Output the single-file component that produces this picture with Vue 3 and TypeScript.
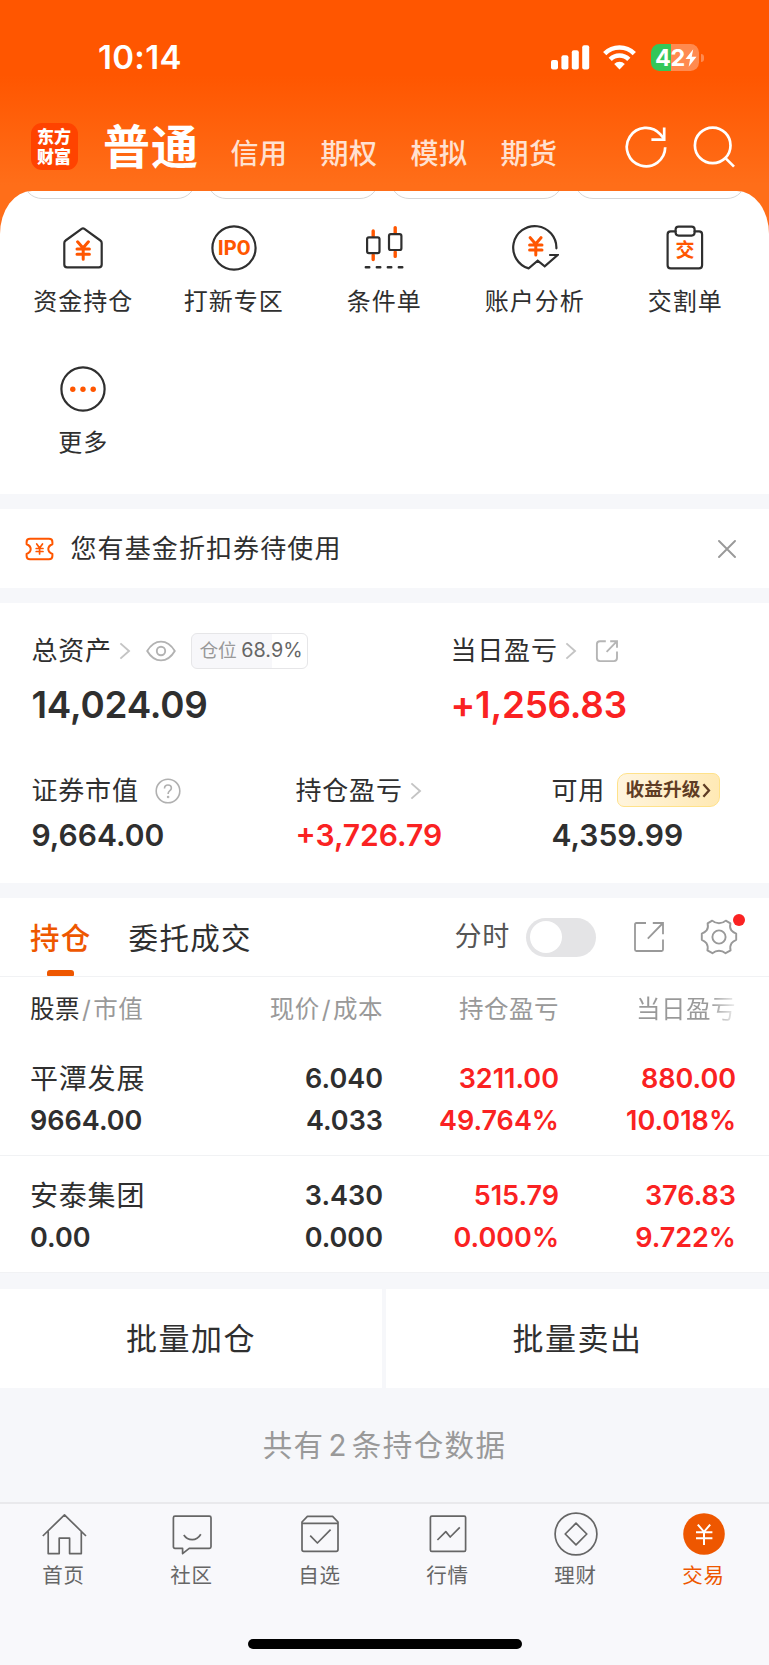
<script setup lang="ts">
interface Holding {
  name: string
  value: string
  price: string
  cost: string
  profit: string
  profitRate: string
  dayProfit: string
  dayRate: string
}

const accounts: string[] = ['信用', '期权', '模拟', '期货']

const shortcuts: { icon: string; label: string }[] = [
  { icon: 'house', label: '资金持仓' },
  { icon: 'ipo', label: '打新专区' },
  { icon: 'candles', label: '条件单' },
  { icon: 'analysis', label: '账户分析' },
  { icon: 'clipboard', label: '交割单' },
  { icon: 'more', label: '更多' },
]

const holdings: Holding[] = [
  {
    name: '平潭发展', value: '9664.00', price: '6.040', cost: '4.033',
    profit: '3211.00', profitRate: '49.764%', dayProfit: '880.00', dayRate: '10.018%',
  },
  {
    name: '安泰集团', value: '0.00', price: '3.430', cost: '0.000',
    profit: '515.79', profitRate: '0.000%', dayProfit: '376.83', dayRate: '9.722%',
  },
]

const tabs: { icon: string; label: string }[] = [
  { icon: 'home', label: '首页' },
  { icon: 'community', label: '社区' },
  { icon: 'watchlist', label: '自选' },
  { icon: 'market', label: '行情' },
  { icon: 'wealth', label: '理财' },
  { icon: 'trade', label: '交易' },
]
</script>

<template>
  <div class="screen">
    <header class="top">
      <div class="status">
        <span class="time">10:14</span>
        <div class="signals">
          <svg class="bars" width="39" height="25" viewBox="0 0 39 25" fill="#fff">
            <rect x="0" y="15" width="7" height="9.5" rx="2" />
            <rect x="10.4" y="10.3" width="7" height="14.2" rx="2" />
            <rect x="20.8" y="5.3" width="7" height="19.2" rx="2" />
            <rect x="31.2" y="0.2" width="7" height="24.3" rx="2" />
          </svg>
          <svg class="wifi" width="33" height="25" viewBox="0 0 33 25">
            <path d="M16.5 24.4 L11.2 19 A7.6 7.6 0 0 1 21.8 19 Z" fill="#fff" />
            <path d="M7.2 14.3 A13.2 13.2 0 0 1 25.8 14.3" fill="none" stroke="#fff" stroke-width="4.6" />
            <path d="M1.7 8.6 A21 21 0 0 1 31.3 8.6" fill="none" stroke="#fff" stroke-width="4.6" />
          </svg>
          <div class="battery">
            <div class="cell">
              <span class="level">42</span>
              <svg width="12" height="18" viewBox="0 0 11 17"><path d="M7.6 .3 L.3 9.5 H4.7 L3.3 16.7 L10.7 7.3 H6.2 Z" fill="#fff" /></svg>
            </div>
            <i class="nub"></i>
          </div>
        </div>
      </div>
      <nav class="accounts">
        <div class="logo"><span>东方财富</span></div>
        <span class="current">普通</span>
        <span v-for="a in accounts" :key="a" class="account">{{ a }}</span>
        <svg class="refresh" width="42" height="42" viewBox="0 0 42 42" fill="none" stroke="#fff" stroke-width="2.7">
          <path d="M40.2 21.3 A19.2 19.2 0 1 1 35.4 8.4 L39 12.6" />
          <path d="M39.2 1.5 V13.6 H26.4" />
        </svg>
        <svg class="search" width="42" height="42" viewBox="0 0 42 42" fill="none" stroke="#fff" stroke-width="2.7">
          <circle cx="19.7" cy="19.4" r="17.8" />
          <path d="M32 31.6 L41 40.6" />
        </svg>
      </nav>
    </header>

    <section class="panel">
      <div class="pills"><i v-for="n in 4" :key="n"></i></div>
      <div class="shortcuts">
        <div v-for="s in shortcuts" :key="s.label" class="shortcut">
          <svg width="48" height="48" viewBox="0 0 48 48" fill="none" stroke="#2f2f2f" stroke-width="2.2" stroke-linejoin="round" stroke-linecap="round">
            <template v-if="s.icon === 'house'">
              <path d="M5.3 19 Q5.3 17.4 6.6 16.5 L22.6 4.8 Q24 3.8 25.4 4.8 L41.4 16.5 Q42.7 17.4 42.7 19 V40.5 Q42.7 43.3 39.9 43.3 H8.1 Q5.3 43.3 5.3 40.5 Z" />
              <path d="M18.6 17.8 L24 24 L29.4 17.8 M18 25.1 H30.4 M18 30.2 H30.4 M24.2 24 V35.2" stroke="#ff5600" stroke-width="3" />
            </template>
            <template v-else-if="s.icon === 'ipo'">
              <circle cx="24" cy="24" r="21.6" />
              <text x="24.2" y="31" text-anchor="middle" class="ipo">IPO</text>
            </template>
            <template v-else-if="s.icon === 'candles'">
              <path d="M13.2 7 V12 M13.2 31 V35.6 M35.2 3.6 V9 M35.2 28 V32.4" stroke="#ff5600" stroke-width="3.4" />
              <rect x="7.1" y="13.3" width="12.4" height="15.8" rx="1.8" />
              <rect x="29" y="10.2" width="12.4" height="15.8" rx="1.8" />
              <path d="M5.8 43.3 H9.3 M16.8 43.3 H20.3 M27.8 43.3 H31.3 M38.8 43.3 H42.3" stroke-width="2.4" />
            </template>
            <template v-else-if="s.icon === 'analysis'">
              <path d="M45.4 24.3 A21.6 21.6 0 1 0 17.7 44.4 L26.7 36.7 L33.7 42.3 L46.6 31 H39" stroke-linejoin="miter" />
              <path d="M19.2 13.7 L24.6 19.9 L30 13.7 M18.6 21 H31 M18.6 26.1 H31 M24.8 20 V31" stroke="#ff5600" stroke-width="3" />
            </template>
            <template v-else-if="s.icon === 'clipboard'">
              <path d="M14.6 7.4 H9.7 Q6.6 7.4 6.6 10.5 V41.2 Q6.6 44.3 9.7 44.3 H38 Q41.1 44.3 41.1 41.2 V10.5 Q41.1 7.4 38 7.4 H33.6" />
              <rect x="14.6" y="2.6" width="19" height="9" rx="3" />
              <text x="24" y="33.4" text-anchor="middle" class="jiao">交</text>
            </template>
            <template v-else>
              <circle cx="24" cy="24" r="21.6" />
              <g fill="#ff5600" stroke="none"><circle cx="13.8" cy="24.2" r="2.7" /><circle cx="24" cy="24.2" r="2.7" /><circle cx="34.2" cy="24.2" r="2.7" /></g>
            </template>
          </svg>
          <span>{{ s.label }}</span>
        </div>
      </div>
    </section>

    <section class="notice">
      <svg width="29" height="24" viewBox="0 0 29 24" fill="none" stroke="#ff5600" stroke-linejoin="round" stroke-linecap="round">
        <path d="M5 1.8 H24 Q27.4 1.8 27.4 5 V7.2 Q23.3 8.8 23.3 12 Q23.3 15.2 27.4 17 V19 Q27.4 22.2 24 22.2 H5 Q1.6 22.2 1.6 19 V17 Q5.7 15.2 5.7 12 Q5.7 8.8 1.6 7.2 V5 Q1.6 1.8 5 1.8 Z" stroke-width="2" />
        <path d="M11.7 7 L14.6 11 L17.5 7 M11.2 11.5 H18 M11.2 14.5 H18 M14.6 11 V17" stroke-width="1.7" />
      </svg>
      <span>您有基金折扣券待使用</span>
      <svg class="close" width="18" height="18" viewBox="0 0 18 18" stroke="#999" stroke-width="1.9" stroke-linecap="round"><path d="M1 1 L17 17 M17 1 L1 17" /></svg>
    </section>

    <section class="assets">
      <div class="primary">
        <div class="metric">
          <div class="label">
            <span>总资产</span>
            <svg class="chev" width="12" height="18" viewBox="0 0 12 18"><path d="M1.4 1.4 L10 9 L1.4 16.6" /></svg>
            <svg class="eye" width="30" height="22" viewBox="0 0 30 22" fill="none" stroke="#b2b2b2" stroke-width="1.9">
              <path d="M1.2 11 Q6.8 1.6 15 1.6 Q23.2 1.6 28.8 11 Q23.2 20.4 15 20.4 Q6.8 20.4 1.2 11 Z" stroke-linejoin="round" /><circle cx="15" cy="11" r="4.2" />
            </svg>
            <div class="ratio"><span>仓位</span><b>68.9%</b></div>
          </div>
          <strong>14,024.09</strong>
        </div>
        <div class="metric">
          <div class="label">
            <span>当日盈亏</span>
            <svg class="chev" width="12" height="18" viewBox="0 0 12 18"><path d="M1.4 1.4 L10 9 L1.4 16.6" /></svg>
            <svg class="share" width="24" height="24" viewBox="0 0 24 24" fill="none" stroke="#b5b5b5" stroke-width="1.9">
              <path d="M10.8 2.2 H5 Q1.9 2.2 1.9 5.3 V19 Q1.9 22.1 5 22.1 H18.9 Q22 22.1 22 19 V12.4 M15.2 2.2 H22 V8.8 M21.8 2.4 L11.6 12.8" />
            </svg>
          </div>
          <strong class="up">+1,256.83</strong>
        </div>
      </div>
      <div class="secondary">
        <div class="metric">
          <div class="label">
            <span>证券市值</span>
            <svg class="help" width="26" height="26" viewBox="0 0 26 26" fill="none" stroke="#b0b0b0" stroke-width="1.6">
              <circle cx="13" cy="13" r="11.8" />
              <path d="M9.5 10.4 Q9.6 7 13 7 Q16.4 7 16.4 10 Q16.4 11.6 14.6 12.8 Q13.1 13.9 13.1 16" /><circle cx="13.1" cy="19" r=".5" />
            </svg>
          </div>
          <strong>9,664.00</strong>
        </div>
        <div class="metric">
          <div class="label">
            <span>持仓盈亏</span>
            <svg class="chev" width="12" height="18" viewBox="0 0 12 18"><path d="M1.4 1.4 L10 9 L1.4 16.6" /></svg>
          </div>
          <strong class="up">+3,726.79</strong>
        </div>
        <div class="metric">
          <div class="label">
            <span>可用</span>
            <div class="upgrade">
              <span>收益升级</span>
              <svg width="9" height="15" viewBox="0 0 9 15" fill="none" stroke="#5f3d25" stroke-width="2.3"><path d="M1.4 1.2 L7 7.5 L1.4 13.8" /></svg>
            </div>
          </div>
          <strong>4,359.99</strong>
        </div>
      </div>
    </section>

    <section class="positions">
      <div class="bar">
        <span class="tab active">持仓</span>
        <span class="tab">委托成交</span>
        <span class="minute">分时</span>
        <i class="toggle"></i>
        <svg class="export" width="32" height="32" viewBox="0 0 32 32" fill="none" stroke="#999" stroke-width="1.8">
          <path d="M13 2 H3.4 Q2 2 2 3.4 V28.6 Q2 30 3.4 30 H28.6 Q30 30 30 28.6 V18.6 M19.8 2 H30 V13.2 M30 2 L14.8 17.6" />
        </svg>
        <div class="settings">
          <svg width="38" height="38" viewBox="0 0 38 38" fill="none" stroke="#999" stroke-width="1.9" stroke-linejoin="round">
            <path d="M12.2 2.6 Q15 5.2 19 5.2 Q23 5.2 25.8 2.6 L30.4 5.4 Q29.4 9.8 31.4 12.4 Q33 14.4 36.2 15.6 V21.8 Q33 23.2 31.4 25.4 Q29.6 28.2 30.6 32.4 L25.6 35.2 Q22.6 32.8 19 32.8 Q15.4 32.8 12.4 35.2 L7.4 32.4 Q8.4 28.2 6.6 25.4 Q5 23.2 1.8 21.8 V15.6 Q5 14.4 6.6 12.4 Q8.6 9.8 7.6 5.4 Z" />
            <circle cx="19" cy="19" r="6.6" />
          </svg>
          <i></i>
        </div>
      </div>
      <div class="row heading">
        <div><b>股票</b><em>/</em>市值</div>
        <div>现价<em>/</em>成本</div>
        <div>持仓盈亏</div>
        <div class="fade">当日盈亏</div>
      </div>
      <div v-for="h in holdings" :key="h.name" class="row">
        <div><span class="name">{{ h.name }}</span><span>{{ h.value }}</span></div>
        <div><span>{{ h.price }}</span><span>{{ h.cost }}</span></div>
        <div class="up"><span>{{ h.profit }}</span><span>{{ h.profitRate }}</span></div>
        <div class="up"><span>{{ h.dayProfit }}</span><span>{{ h.dayRate }}</span></div>
      </div>
    </section>

    <div class="batch">
      <div>批量加仓</div>
      <div>批量卖出</div>
    </div>

    <p class="count">共有<span>2</span>条持仓数据</p>

    <footer class="tabbar">
      <div class="tabs">
        <div v-for="t in tabs" :key="t.label" :class="['item', { on: t.icon === 'trade' }]">
          <svg width="46" height="46" viewBox="0 0 46 46" fill="none" stroke="#666" stroke-width="1.7" stroke-linejoin="round">
            <template v-if="t.icon === 'home'">
              <path d="M1.8 25 L23.5 3.8 L45 25 M7.2 20.5 V42.6 H18.2 V27.2 H28.6 V42.6 H40.3 V20.5" />
            </template>
            <template v-else-if="t.icon === 'community'">
              <path d="M6 5.2 H40.4 Q42 5.2 42 6.8 V35.8 Q42 37.4 40.4 37.4 H20.2 L13.6 42.6 V37.4 H6 Q4.4 37.4 4.4 35.8 V6.8 Q4.4 5.2 6 5.2 Z" />
              <path d="M14.8 24 Q17.8 28.6 23.2 28.6 Q28.6 28.6 31.8 23.2" />
            </template>
            <template v-else-if="t.icon === 'watchlist'">
              <path d="M5 12.4 H41 V38.6 Q41 40.4 39.2 40.4 H6.8 Q5 40.4 5 38.6 V11 L10.4 5.4 H35.6 L41 11 V12.4" />
              <path d="M13.2 24.6 L20.4 32 L33.6 18.6" />
            </template>
            <template v-else-if="t.icon === 'market'">
              <rect x="5.4" y="5.2" width="35.2" height="35.2" rx="1.4" />
              <path d="M12.4 29 L20.8 20.6 L25.2 26 L34.8 16.4" />
            </template>
            <template v-else-if="t.icon === 'wealth'">
              <circle cx="23" cy="23" r="20.9" />
              <path d="M23 12.2 L33.8 23 L23 33.8 L12.2 23 Z" />
            </template>
            <template v-else>
              <circle cx="23" cy="23" r="20.8" fill="#ee5700" stroke="none" />
              <path d="M16.8 13.6 L23 20.8 L29.2 13.6 M15 21.2 H31.4 M15 27.2 H31.4 M23 20.8 V34" stroke="#fff" stroke-width="2" stroke-linejoin="miter" />
            </template>
          </svg>
          <span>{{ t.label }}</span>
        </div>
      </div>
      <i class="indicator"></i>
    </footer>
  </div>
</template>

<style>
body {
  margin: 0;
  background: #f6f7fa;
}
</style>

<style scoped>
.screen {
  width: 769px;
  height: 1665px;
  display: flex;
  flex-direction: column;
  overflow: hidden;
  background: #f6f7fa;
  color: #2f2f2f;
  font-family: Inter, "Noto Sans CJK SC", sans-serif;
  line-height: 1.2;
}
svg {
  display: block;
  flex: none;
}
span, b, em, strong {
  white-space: nowrap;
}
i, em {
  font-style: normal;
}
.up {
  color: #fa2222;
}

.top {
  box-sizing: border-box;
  flex: none;
  height: 241px;
  margin-bottom: -50px;
  background: linear-gradient(#ff5600 0, #ff5600 75px, #ff6e19 185px);
  color: #fff;
}
.status {
  display: flex;
  justify-content: space-between;
  height: 107px;
  padding: 8px 65px 0 98px;
  align-items: center;
  box-sizing: border-box;
}
.time {
  font-size: 33px;
  font-weight: 600;
  letter-spacing: 0.3px;
}
.signals {
  display: flex;
  align-items: center;
}
.wifi {
  margin-left: 13px;
}
.battery {
  display: flex;
  align-items: center;
  margin-left: 15px;
}
.cell {
  box-sizing: border-box;
  width: 48px;
  height: 27px;
  padding-left: 4px;
  border-radius: 8.5px;
  background: linear-gradient(90deg, #34c759 0 20px, #ff8a4f 20px);
  display: flex;
  align-items: center;
}
.level {
  font-size: 23.5px;
  line-height: 27px;
  font-weight: 700;
  letter-spacing: -0.4px;
}
.nub {
  width: 3px;
  height: 8px;
  margin-left: 2px;
  border-radius: 0 3px 3px 0;
  background: #ff8a4f;
}
.accounts {
  display: flex;
  align-items: center;
  height: 79px;
  padding: 0 34px 0 31px;
}
.logo {
  width: 47px;
  height: 47px;
  border-radius: 11px;
  background: #ff4300;
  display: flex;
  align-items: center;
  justify-content: center;
}
.logo span {
  width: 35px;
  font-size: 17px;
  font-weight: 900;
  line-height: 20px;
  white-space: normal;
  word-break: break-all;
}
.current {
  margin: 1px 15px 0 25px;
  font-size: 47px;
  font-weight: 600;
  letter-spacing: 1px;
}
.account {
  margin: 16px 0 0 0;
  width: 90px;
  text-align: center;
  font-size: 28px;
  letter-spacing: 0.6px;
  font-weight: 500;
  color: #ffe1d1;
}
.refresh {
  margin-left: auto;
}
.search {
  margin-left: 26px;
}

.panel {
  flex: none;
  height: 303px;
  border-radius: 32px 32px 0 0 / 43px 43px 0 0;
  background: #fff;
  overflow: hidden;
}
.pills {
  display: grid;
  grid-template-columns: repeat(4, 1fr);
  column-gap: 11px;
  height: 8px;
  padding: 0 23px;
  overflow: hidden;
}
.pills i {
  box-sizing: border-box;
  height: 44px;
  margin-top: -36px;
  border: 1px solid #d6d6d6;
  border-radius: 19px;
}
.shortcuts {
  display: grid;
  grid-template-columns: repeat(5, 150.5px);
  grid-auto-rows: 141px;
  padding: 25px 8px 0;
}
.shortcut {
  display: flex;
  flex-direction: column;
  align-items: center;
}
.shortcut span {
  margin-top: 14px;
  font-size: 24px;
  line-height: 32px;
  letter-spacing: 1px;
}
.ipo {
  font: 800 20px Roboto, sans-serif;
  fill: #ff5600;
  stroke: none;
}
.jiao {
  font: 700 19px "Noto Sans CJK SC", sans-serif;
  fill: #ff5600;
  stroke: none;
}

.notice {
  flex: none;
  display: flex;
  align-items: center;
  height: 79px;
  margin-top: 15px;
  padding: 0 33px 0 25px;
  background: #fff;
}
.notice span {
  margin-left: 16.5px;
  font-size: 26px;
  letter-spacing: 1.1px;
}
.close {
  margin-left: auto;
}

.assets {
  flex: none;
  box-sizing: border-box;
  height: 280px;
  margin-top: 15px;
  padding: 28px 0 0 31.5px;
  background: #fff;
}
.primary, .secondary {
  display: grid;
}
.primary {
  grid-template-columns: 419px 1fr;
  height: 140px;
}
.secondary {
  grid-template-columns: 264px 256px 1fr;
}
.label {
  display: flex;
  align-items: center;
  height: 40px;
  font-size: 26px;
  letter-spacing: 0.8px;
}
.chev {
  margin-left: 7px;
  fill: none;
  stroke: #c4c4c4;
  stroke-width: 1.9px;
}
.eye {
  margin-left: 15px;
}
.ratio {
  box-sizing: border-box;
  display: flex;
  align-items: center;
  width: 117px;
  height: 36px;
  margin-left: 15.5px;
  padding-left: 7px;
  border: 1.5px solid #e6e6e8;
  border-radius: 6px;
  background: linear-gradient(90deg, #f7f7fa 0 80px, #fff 80px);
  font-size: 18.7px;
  letter-spacing: 0;
  color: #999;
}
.ratio b {
  margin-left: 4.5px;
  font-size: 19.8px;
  font-weight: 400;
  color: #666;
}
.share {
  margin-left: 18px;
}
.metric strong {
  display: block;
  font-weight: 600;
}
.primary strong {
  font-size: 36.8px;
  line-height: 44px;
  margin-top: 12px;
  letter-spacing: -0.2px;
}
.secondary strong {
  font-size: 30px;
  line-height: 36px;
  margin-top: 6px;
}
.help {
  margin-left: 16px;
}
.upgrade {
  box-sizing: border-box;
  display: flex;
  align-items: center;
  width: 103px;
  height: 34px;
  margin: -2px 0 0 11.5px;
  padding-left: 8px;
  border: 1.5px solid #ffe28a;
  border-radius: 10px 7px 10px 7px;
  background: linear-gradient(100deg, #fff5df, #ffe9b4);
  color: #5f3d25;
  font-size: 18.7px;
  font-weight: 700;
  letter-spacing: 0;
}
.upgrade svg {
  margin-left: 2px;
}

.positions {
  flex: none;
  margin-top: 15px;
  background: #fff;
}
.bar {
  box-sizing: border-box;
  display: flex;
  align-items: center;
  height: 79px;
  padding: 0 31px 0 30px;
  border-bottom: 1px solid #f1f2f4;
}
.tab {
  height: 78px;
  margin-right: 37px;
  font-size: 29.5px;
  line-height: 80px;
  letter-spacing: 1.3px;
}
.tab.active {
  position: relative;
  font-weight: 500;
  color: #ee5700;
}
.tab.active::after {
  content: "";
  position: absolute;
  left: 17px;
  bottom: 0;
  width: 27px;
  height: 6px;
  border-radius: 3px 3px 1px 1px;
  background: #ee5700;
}
.minute {
  margin-left: auto;
  font-size: 27px;
  letter-spacing: 0.8px;
  color: #555;
}
.toggle {
  box-sizing: border-box;
  width: 70px;
  height: 39px;
  margin-left: 16px;
  padding: 3.5px;
  border-radius: 20px;
  background: #e4e4e6;
}
.toggle::before {
  content: "";
  display: block;
  width: 32px;
  height: 32px;
  border-radius: 50%;
  background: #fff;
}
.export {
  margin-left: 37px;
}
.settings {
  position: relative;
  margin-left: 35px;
}
.settings i {
  position: absolute;
  left: 32.5px;
  top: -4.5px;
  width: 12px;
  height: 12px;
  border-radius: 50%;
  background: #fa2222;
}
.row {
  box-sizing: border-box;
  display: grid;
  grid-template-columns: 176px 177px 176px 177px;
  height: 117px;
  padding: 19px 0 0 30px;
  border-bottom: 1px solid #f1f2f4;
  font-size: 27px;
  font-weight: 600;
  letter-spacing: 0;
}
.row div {
  text-align: right;
}
.row div:first-child {
  text-align: left;
}
.row span {
  display: block;
  line-height: 42px;
}
.row .name {
  font-size: 28px;
  font-weight: 400;
  letter-spacing: 0.8px;
}
.row.heading {
  height: 62px;
  padding-top: 10.5px;
  border: 0;
  font-size: 24.5px;
  line-height: 42px;
  font-weight: 400;
  letter-spacing: 0.5px;
  color: #999;
}
.heading b {
  font-weight: 400;
  color: #2f2f2f;
}
.heading em {
  margin: 0 2px;
}
.heading .fade {
  color: transparent;
  background: linear-gradient(90deg, #999 calc(100% - 26px), rgba(153, 153, 153, 0.15));
  background-clip: text;
  -webkit-background-clip: text;
}

.batch {
  flex: none;
  display: grid;
  grid-template-columns: 382px 383px;
  column-gap: 4px;
  height: 98px;
  margin-top: 16px;
  text-align: center;
  font-size: 31px;
  line-height: 99px;
  letter-spacing: 1.5px;
}
.batch div {
  background: #fff;
}
.count {
  flex: none;
  height: 115px;
  margin: 0;
  text-align: center;
  font-size: 29.5px;
  line-height: 117px;
  letter-spacing: 1.4px;
  color: #999;
}
.count span {
  margin: 0 4px;
}
.tabbar {
  flex: 1;
  border-top: 2px solid #e9e9ec;
  background: #f8f8fb;
}
.tabs {
  display: grid;
  grid-template-columns: repeat(6, 128px);
  height: 135px;
}
.item {
  display: flex;
  flex-direction: column;
  align-items: center;
  padding-top: 7px;
  font-size: 20.5px;
  line-height: 28px;
  letter-spacing: 0.8px;
  color: #666;
}
.item span {
  margin: 5px 1px 0 0;
}
.item.on {
  color: #ee5700;
}
.indicator {
  display: block;
  width: 274px;
  height: 10px;
  margin: 0 auto;
  border-radius: 5px;
  background: #000;
}
</style>
